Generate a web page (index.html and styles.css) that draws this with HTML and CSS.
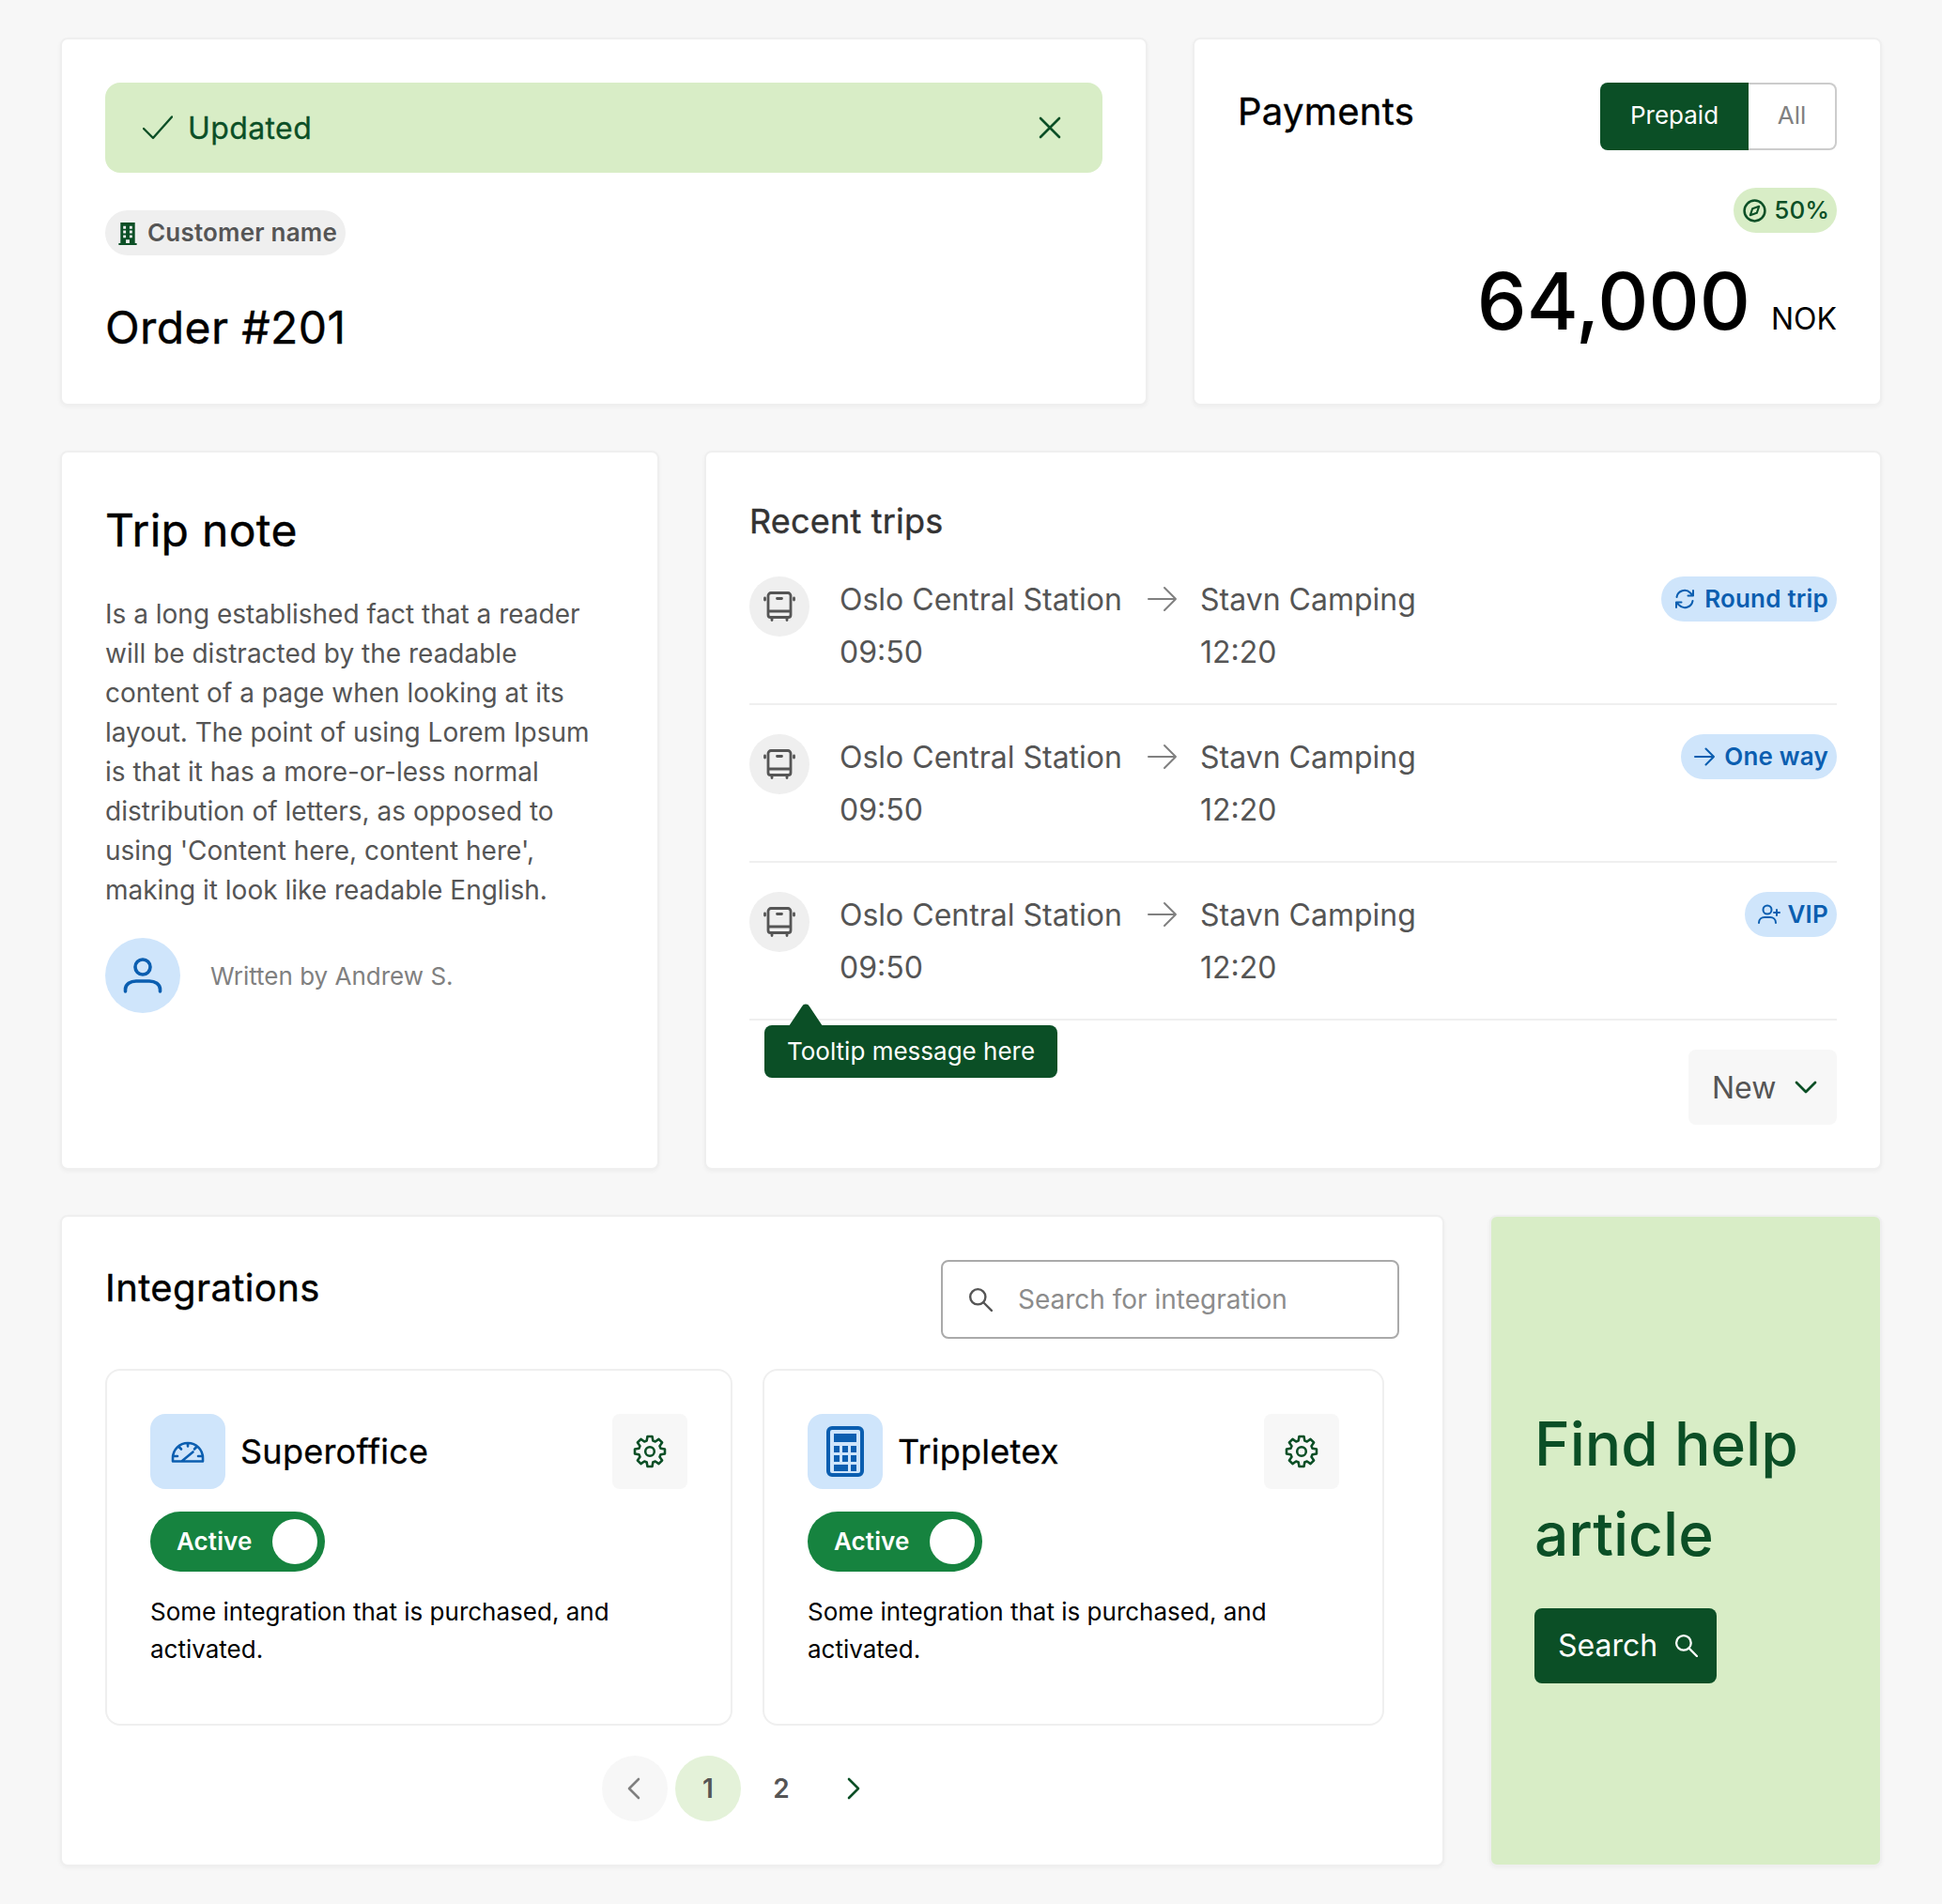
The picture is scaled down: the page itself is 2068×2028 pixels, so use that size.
FILE: index.html
```html
<!DOCTYPE html>
<html lang="en">
<head>
<meta charset="utf-8">
<title>Dashboard</title>
<link rel="stylesheet" href="styles.css">
</head>
<body>
<svg class="sprite" aria-hidden="true">
  <symbol id="bus" viewBox="0 0 34 32">
    <path d="M5 9V4.500A3 3 0 0 1 8 1.500h18a3 3 0 0 1 3 3V25a2.500 2.500 0 0 1-2.500 2.500h-19A2.500 2.500 0 0 1 5 25zM5 21h24M14.500 7.500h5M1.500 7v2M32.500 7v2M9 28v2.500M25 28v2.500" fill="none" stroke="currentColor" stroke-width="2.800" stroke-linecap="round"/>
  </symbol>
  <symbol id="arrow" viewBox="0 0 32 28">
    <path d="M1 14h29M18 2l12 12-12 12" fill="none" stroke="currentColor" stroke-width="2" stroke-linecap="round" stroke-linejoin="round"/>
  </symbol>
  <symbol id="gear" viewBox="0 0 24 24">
    <polygon points="10.31,1.33 13.69,1.33 14.2,4.31 15.88,5 18.35,3.26 20.74,5.65 19,8.12 19.69,9.8 22.67,10.31 22.67,13.69 19.69,14.2 19,15.88 20.74,18.35 18.35,20.74 15.88,19 14.2,19.69 13.69,22.67 10.31,22.67 9.8,19.69 8.12,19 5.65,20.74 3.26,18.35 5,15.88 4.31,14.2 1.33,13.69 1.33,10.31 4.31,9.8 5,8.12 3.26,5.65 5.65,3.26 8.12,5 9.8,4.31" fill="none" stroke="currentColor" stroke-width="1.700" stroke-linejoin="round"/>
    <circle cx="12" cy="12" r="3.200" fill="none" stroke="currentColor" stroke-width="1.700"/>
  </symbol>
  <symbol id="search" viewBox="0 0 24 24">
    <circle cx="9.500" cy="9.500" r="7.500" fill="none" stroke="currentColor" stroke-width="2.200"/>
    <path d="M15 15l8 8" fill="none" stroke="currentColor" stroke-width="2.200" stroke-linecap="round"/>
  </symbol>
</svg>

<main class="page">
  <section class="row row-top">
    <article class="card">
      <div class="alert">
        <div class="alert-msg">
          <svg class="icon-check" viewBox="0 0 32 26"><path d="M1 14l10 10L31 1.500" fill="none" stroke="currentColor" stroke-width="2.400" stroke-linecap="round" stroke-linejoin="round"/></svg>
          <span>Updated</span>
        </div>
        <svg class="icon-close" viewBox="0 0 24 24"><path d="M2 2l20 20M22 2L2 22" fill="none" stroke="currentColor" stroke-width="2.600" stroke-linecap="round"/></svg>
      </div>
      <div class="chip">
        <svg class="icon-building" viewBox="0 0 20 26"><path fill-rule="evenodd" d="M2 1h16v23h2v2H0v-2h2zM5 5v3h3V5zm7 0v3h3V5zM5 10v3h3v-3zm7 0v3h3v-3zM5 15v3h3v-3zm7 0v3h3v-3zM8 20v4h4v-4z" fill="currentColor"/></svg>
        <span>Customer name</span>
      </div>
      <h1 class="order-title">Order #201</h1>
    </article>

    <article class="card">
      <div class="pay-head">
        <h2 class="h-40">Payments</h2>
        <div class="seg">
          <span class="seg-on">Prepaid</span>
          <span class="seg-off">All</span>
        </div>
      </div>
      <div class="pay-body">
        <div class="pct">
          <svg class="icon-compass" viewBox="0 0 24 24"><circle cx="12" cy="12" r="10.500" fill="none" stroke="currentColor" stroke-width="2.400"/><path d="M16.500 7.500l-2.300 6.700-6.700 2.300 2.300-6.700z" fill="none" stroke="currentColor" stroke-width="2" stroke-linejoin="round"/></svg>
          <span>50%</span>
        </div>
        <div class="amount"><span class="amount-num">64,000</span><span class="amount-cur">NOK</span></div>
      </div>
    </article>
  </section>

  <section class="row row-mid">
    <article class="card">
      <h2 class="note-title">Trip note</h2>
      <p class="note-text">Is a long established fact that a reader will be distracted by the readable content of a page when looking at its layout. The point of using Lorem Ipsum is that it has a more-or-less normal distribution of letters, as opposed to using 'Content here, content here', making it look like readable English.</p>
      <div class="author">
        <div class="avatar">
          <svg class="icon-user" viewBox="0 0 42 38"><circle cx="21" cy="10" r="8" fill="none" stroke="currentColor" stroke-width="3.600"/><path d="M2.500 36v-2C2.500 28 8 25 14 25h14c6 0 11.500 3 11.500 9v2" fill="none" stroke="currentColor" stroke-width="3.600" stroke-linecap="round"/></svg>
        </div>
        <span>Written by Andrew S.</span>
      </div>
    </article>

    <article class="card card-trips">
      <h2 class="trips-title">Recent trips</h2>
      <div class="trip">
        <div class="trip-icon"><svg class="icon-bus"><use href="#bus"/></svg></div>
        <div class="stops">
          <span>Oslo Central Station</span>
          <svg class="icon-arrow"><use href="#arrow"/></svg>
          <span>Stavn Camping</span>
          <span>09:50</span>
          <span></span>
          <span>12:20</span>
        </div>
        <div class="badge">
          <svg class="icon-badge" viewBox="0 0 22 22"><path d="M2.500 9A8.500 8.500 0 0 1 17 4.500L20 7.500M20 2v5.500h-5.500M19.500 13A8.500 8.500 0 0 1 5 17.500L2 14.500M2 20v-5.500h5.500" fill="none" stroke="currentColor" stroke-width="2" stroke-linecap="round" stroke-linejoin="round"/></svg>
          <span>Round trip</span>
        </div>
      </div>
      <div class="trip">
        <div class="trip-icon"><svg class="icon-bus"><use href="#bus"/></svg></div>
        <div class="stops">
          <span>Oslo Central Station</span>
          <svg class="icon-arrow"><use href="#arrow"/></svg>
          <span>Stavn Camping</span>
          <span>09:50</span>
          <span></span>
          <span>12:20</span>
        </div>
        <div class="badge">
          <svg class="icon-badge" viewBox="0 0 22 20"><path d="M1 10h20M12.500 1.500L21 10l-8.500 8.500" fill="none" stroke="currentColor" stroke-width="2" stroke-linecap="round" stroke-linejoin="round"/></svg>
          <span>One way</span>
        </div>
      </div>
      <div class="trip">
        <div class="trip-icon"><svg class="icon-bus"><use href="#bus"/></svg></div>
        <div class="stops">
          <span>Oslo Central Station</span>
          <svg class="icon-arrow"><use href="#arrow"/></svg>
          <span>Stavn Camping</span>
          <span>09:50</span>
          <span></span>
          <span>12:20</span>
        </div>
        <div class="badge badge-vip">
          <svg class="icon-badge" viewBox="0 0 24 22"><circle cx="10" cy="6" r="4.500" fill="none" stroke="currentColor" stroke-width="2"/><path d="M1 20c0-4 3-6 6-6h6c3 0 6 2 6 6M20 6v6M17 9h6" fill="none" stroke="currentColor" stroke-width="2" stroke-linecap="round"/></svg>
          <span>VIP</span>
        </div>
      </div>
      <div class="trips-foot">
        <div class="select">
          <span>New</span>
          <svg class="icon-chev-down" viewBox="0 0 24 14"><path d="M2 2l10 10L22 2" fill="none" stroke="currentColor" stroke-width="2.800" stroke-linecap="round" stroke-linejoin="round"/></svg>
        </div>
      </div>
      <div class="tooltip">
        <svg class="tooltip-tip" viewBox="0 0 36 24"><path d="M0 24L14 3a4.500 4.500 0 0 1 8 0L36 24z" fill="currentColor"/></svg>
        Tooltip message here
      </div>
    </article>
  </section>

  <section class="row row-bot">
    <article class="card">
      <div class="int-head">
        <h2 class="h-40 h-int">Integrations</h2>
        <div class="search-field">
          <svg class="icon-search"><use href="#search"/></svg>
          <span>Search for integration</span>
        </div>
      </div>
      <div class="int-grid">
        <div class="int-card">
          <div class="int-top">
            <div class="tile">
              <svg class="icon-gauge" viewBox="0 0 36 24"><path d="M2 22.500h32V19A16 16 0 0 0 2 19zM18 3v3.500M8.500 7l2.500 2.500M27.500 7L25 9.500M3 17h4M33 17h-4M12 22l11.500-9.500" fill="none" stroke="currentColor" stroke-width="2.600" stroke-linecap="round" stroke-linejoin="round"/></svg>
            </div>
            <h3 class="int-name">Superoffice</h3>
            <div class="gear-btn"><svg class="icon-gear"><use href="#gear"/></svg></div>
          </div>
          <div class="toggle"><span>Active</span><i class="knob"></i></div>
          <p class="int-text">Some integration that is purchased, and activated.</p>
        </div>
        <div class="int-card">
          <div class="int-top">
            <div class="tile">
              <svg class="icon-calc" viewBox="0 0 40 54"><rect x="2" y="2" width="36" height="50" rx="4" fill="none" stroke="currentColor" stroke-width="4"/><path fill="currentColor" d="M8 8h24v9H8zM8 21h6v7H8zM17 21h6v7h-6zM26 21h6v7h-6zM8 31h6v7H8zM17 31h6v7h-6zM26 31h6v7h-6zM8 41h15v7H8zM26 41h6v7h-6z"/></svg>
            </div>
            <h3 class="int-name">Trippletex</h3>
            <div class="gear-btn"><svg class="icon-gear"><use href="#gear"/></svg></div>
          </div>
          <div class="toggle"><span>Active</span><i class="knob"></i></div>
          <p class="int-text">Some integration that is purchased, and activated.</p>
        </div>
      </div>
      <nav class="pager">
        <span class="pg pg-prev"><svg class="icon-pg" viewBox="0 0 14 24"><path d="M12 2L2 12l10 10" fill="none" stroke="currentColor" stroke-width="2.600" stroke-linecap="round" stroke-linejoin="round"/></svg></span>
        <span class="pg pg-on">1</span>
        <span class="pg">2</span>
        <span class="pg pg-next"><svg class="icon-pg" viewBox="0 0 14 24"><path d="M2 2l10 10L2 22" fill="none" stroke="currentColor" stroke-width="2.600" stroke-linecap="round" stroke-linejoin="round"/></svg></span>
      </nav>
    </article>

    <article class="card card-help">
      <h2 class="help-title">Find help article</h2>
      <div class="help-btn">
        <span>Search</span>
        <svg class="icon-search-sm"><use href="#search"/></svg>
      </div>
    </article>
  </section>
</main>
</body>
</html>
```

FILE: styles.css
```css
* { box-sizing: border-box; }
html, body { margin: 0; }
body {
  background: #f7f7f7;
  font-family: Inter, "Noto Sans", sans-serif;
  color: #000;
}
h1, h2, h3, p { margin: 0; font-weight: 400; }
svg { display: block; flex: none; }
.sprite { display: none; }

.page {
  display: flex;
  flex-direction: column;
  gap: 48px;
  padding: 40px 64px;
}
.row { display: grid; gap: 48px; }
.row-top { grid-template-columns: 1158px 734px; height: 392px; }
.row-mid { grid-template-columns: 638px 1254px; height: 766px; }
.row-bot { grid-template-columns: 1474px 418px; height: 694px; }

.card {
  background: #fff;
  border: 2px solid #efefef;
  border-radius: 8px;
  padding: 46px;
  box-shadow: 0 2px 4px rgba(0,0,0,.04);
  min-width: 0;
}

/* order */
.alert {
  height: 96px;
  background: #d8edc6;
  border-radius: 16px;
  color: #0b4f26;
  display: flex;
  align-items: center;
  justify-content: space-between;
  padding: 0 44px 0 40px;
}
.alert-msg { display: flex; align-items: center; gap: 16px; font-size: 32px; letter-spacing: .4px; -webkit-text-stroke: .3px currentColor; }
.icon-check { width: 32px; height: 26px; }
.icon-close { width: 24px; height: 24px; }
.chip {
  display: inline-flex;
  align-items: center;
  height: 48px;
  margin-top: 40px;
  padding: 0 9px 0 14px;
  background: #efefef;
  border-radius: 24px;
  color: #555;
  font-size: 26px;
  font-weight: 600;
  letter-spacing: .2px;
  gap: 11px;
}
.chip span { margin-top: -2px; }
.icon-building { width: 20px; height: 25px; color: #0b4f26; }
.order-title { font-size: 48px; line-height: 64px; margin-top: 45px; letter-spacing: .4px; -webkit-text-stroke: .4px currentColor; }

/* payments */
.pay-head { display: flex; justify-content: space-between; align-items: flex-start; }
.h-40 { font-size: 40px; line-height: 56px; letter-spacing: .3px; padding-top: 3px; -webkit-text-stroke: .4px currentColor; }
.h-int { padding-top: 2px; letter-spacing: .4px; }
.seg {
  display: flex;
  height: 72px;
  font-size: 26px;
  line-height: 70px;
}
.seg-on {
  width: 158px;
  text-align: center;
  background: #0b4f26;
  color: #fff;
  border-radius: 8px 0 0 8px;
}
.seg-off {
  width: 94px;
  text-align: center;
  color: #808080;
  line-height: 66px;
  border: 2px solid #ccc;
  border-left: 0;
  border-radius: 0 8px 8px 0;
}
.pay-body { display: flex; flex-direction: column; align-items: flex-end; margin-top: 40px; }
.pct {
  display: flex;
  align-items: center;
  gap: 8px;
  height: 48px;
  padding: 0 8px 0 10px;
  background: #d8edc6;
  border-radius: 24px;
  color: #0b4f26;
  font-size: 26px;
  font-weight: 500;
}
.pct span { margin-top: -2px; }
.icon-compass { width: 25px; height: 25px; }
.amount { display: flex; align-items: baseline; gap: 22px; margin-top: 19px; }
.amount-num { font-size: 84px; line-height: 108px; font-weight: 500; }
.amount-cur { font-size: 32px; line-height: 40px; }

/* note */
.note-title { font-size: 48px; line-height: 72px; letter-spacing: .3px; margin-top: 1px; -webkit-text-stroke: .4px currentColor; }
.note-text { font-size: 28px; line-height: 42px; color: #555; margin-top: 32px; }
.author { display: flex; align-items: center; gap: 32px; margin-top: 30px; font-size: 26px; color: #808080; }
.avatar {
  width: 80px;
  height: 80px;
  border-radius: 50%;
  background: #cfe5fb;
  color: #0b5eb0;
  display: flex;
  align-items: center;
  justify-content: center;
}
.icon-user { width: 42px; height: 38px; }

/* trips */
.card-trips { position: relative; }
.trips-title { font-size: 36px; line-height: 54px; letter-spacing: .2px; color: #333; margin-bottom: 27px; -webkit-text-stroke: .4px currentColor; }
.trip {
  display: flex;
  height: 142px;
  margin-bottom: 26px;
  border-bottom: 2px solid #efefef;
  color: #555;
}
.trip-icon {
  flex: none;
  width: 64px;
  height: 64px;
  margin-top: 5px;
  border-radius: 50%;
  background: #efefef;
  display: flex;
  align-items: center;
  justify-content: center;
}
.icon-bus { width: 34px; height: 32px; }
.stops {
  flex: 1;
  display: grid;
  grid-template-columns: 328px 56px 1fr;
  grid-auto-rows: 56px;
  align-items: center;
  margin: 1px 0 0 32px;
  font-size: 32px;
}
.icon-arrow { width: 32px; height: 28px; color: #808080; margin-top: -1px; }
.badge {
  flex: none;
  align-self: flex-start;
  display: flex;
  align-items: center;
  gap: 10px;
  height: 48px;
  margin-top: 5px;
  padding: 0 9px 0 14px;
  background: #cfe5fb;
  border-radius: 24px;
  color: #0b5eb0;
  font-size: 26px;
  font-weight: 600;
  letter-spacing: .2px;
}
.badge span { margin-top: -2px; }
.icon-badge { width: 22px; height: 22px; }
.badge-vip { gap: 8px; }
.badge-vip .icon-badge { width: 24px; }
.trips-foot { display: flex; justify-content: flex-end; margin-top: 31px; }
.select {
  display: flex;
  align-items: center;
  gap: 20px;
  width: 158px;
  height: 80px;
  padding: 0 18px 0 25px;
  background: #f7f7f7;
  border-radius: 8px;
  color: #555;
  font-size: 32px;
}
.icon-chev-down { width: 24px; height: 14px; color: #0b4f26; }
.tooltip {
  position: absolute;
  left: 62px;
  top: 610px;
  height: 56px;
  width: 312px;
  padding: 0 24px;
  background: #0b4f26;
  color: #fff;
  border-radius: 8px;
  font-size: 26px;
  line-height: 56px;
  white-space: nowrap;
}
.tooltip-tip { position: absolute; left: 26px; top: -23px; width: 36px; height: 24px; color: #0b4f26; }

/* integrations */
.int-head { display: flex; justify-content: space-between; align-items: flex-start; }
.search-field {
  display: flex;
  align-items: center;
  gap: 27px;
  width: 488px;
  height: 84px;
  padding: 0 0 0 27px;
  border: 2px solid #aaa;
  border-radius: 8px;
  font-size: 28px;
  color: #8c8c8c;
}
.icon-search { width: 26px; height: 26px; color: #555; }
.int-grid { display: grid; grid-template-columns: 668px 662px; gap: 32px; margin-top: 32px; }
.int-card {
  height: 380px;
  padding: 46px;
  border: 2px solid #efefef;
  border-radius: 16px;
}
.int-top { display: flex; align-items: center; gap: 16px; }
.tile {
  flex: none;
  width: 80px;
  height: 80px;
  border-radius: 16px;
  background: #cfe5fb;
  color: #0b5eb0;
  display: flex;
  align-items: center;
  justify-content: center;
}
.icon-gauge { width: 36px; height: 24px; }
.icon-calc { width: 40px; height: 54px; }
.int-name { flex: 1; font-size: 36px; line-height: 56px; letter-spacing: .25px; -webkit-text-stroke: .3px currentColor; }
.gear-btn {
  flex: none;
  width: 80px;
  height: 80px;
  border-radius: 8px;
  background: #f7f7f7;
  color: #0b4f26;
  display: flex;
  align-items: center;
  justify-content: center;
}
.icon-gear { width: 36px; height: 36px; }
.toggle {
  display: flex;
  align-items: center;
  justify-content: space-between;
  width: 186px;
  height: 64px;
  margin-top: 24px;
  padding: 0 8px 0 28px;
  background: #16833f;
  border-radius: 32px;
  color: #fff;
  font-size: 26px;
  font-weight: 600;
  letter-spacing: .1px;
}
.toggle span { margin-top: -2px; }
.knob { width: 48px; height: 48px; border-radius: 50%; background: #fff; }
.int-text { font-size: 26px; line-height: 40px; margin-top: 23px; }
.pager { display: flex; gap: 8px; margin: 32px 0 0 529px; }
.pg {
  width: 70px;
  height: 70px;
  border-radius: 50%;
  display: flex;
  align-items: center;
  justify-content: center;
  color: #555;
  font-size: 28px;
  font-weight: 600;
}
.pg-prev { background: #f7f7f7; color: #808080; }
.pg-on { background: #e4f2d9; }
.pg-next { color: #0b4f26; }
.icon-pg { width: 14px; height: 24px; margin-left: -2px; }

/* help */
.card-help {
  background: #d8edc6;
  display: flex;
  flex-direction: column;
  justify-content: center;
  align-items: flex-start;
  padding: 0 46px;
}
.help-title { font-size: 64px; line-height: 96px; font-weight: 500; color: #0b4f26; padding-top: 1px; }
.help-btn {
  display: flex;
  align-items: center;
  gap: 18px;
  height: 80px;
  margin-top: 31px;
  padding: 0 20px 0 25px;
  background: #0b4f26;
  border-radius: 8px;
  color: #fff;
  font-size: 32px;
}
.help-btn span { margin-top: -2px; }
.icon-search-sm { width: 25px; height: 25px; margin-top: -2px; }
```
